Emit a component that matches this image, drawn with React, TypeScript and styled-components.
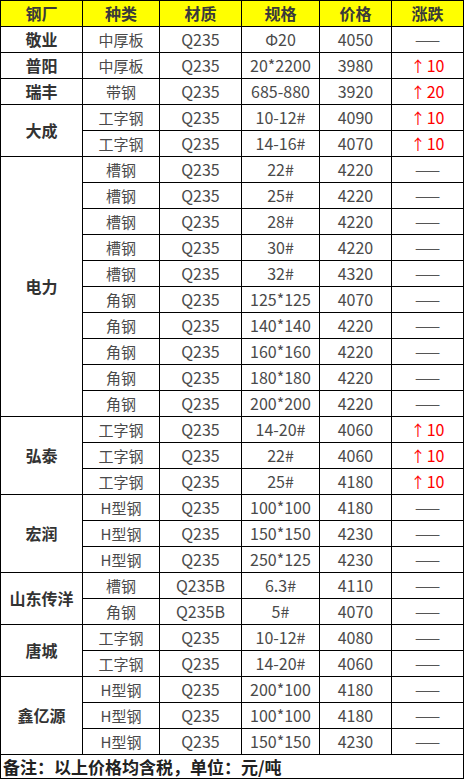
import React from "react";
import styled, { createGlobalStyle } from "styled-components";

const Global = createGlobalStyle`
  html, body { margin: 0; padding: 0; background: #ffffff; }
  body { font-family: "Noto Sans CJK SC", "Noto Sans", sans-serif; }
`;

const Table = styled.table`
  border-collapse: collapse;
  table-layout: fixed;
  width: 463px;
  font-family: "Noto Sans CJK SC", sans-serif;
`;

const HeadCell = styled.th`
  background: #ffff00;
  height: 25px;
  padding: 0;
  border: 1px solid #000;
  color: #3a3a3a;
  font-size: 16px;
  font-weight: 700;
  text-align: center;
  vertical-align: middle;
  line-height: 25px;
`;

const Cell = styled.td<{ $red?: boolean }>`
  height: 25px;
  padding: 0;
  border: 1px solid #000;
  color: ${(p) => (p.$red ? "#ff0000" : "#4a4a4a")};
  font-size: 15px;
  font-weight: 400;
  text-align: center;
  vertical-align: middle;
  line-height: 25px;
  white-space: nowrap;
`;

const NameCell = styled(Cell)`
  color: #333333;
  font-size: 16px;
  font-weight: 700;
`;

const Num = styled.span`
  font-size: 16px;
`;

const Dash = styled.span`
  color: #555555;
  font-size: 15px;
`;

const Arrow = styled.span`
  font-size: 15px;
  margin-right: 1px;
`;

const FootCell = styled.td`
  height: 23px;
  padding: 0 0 0 2px;
  border: 1px solid #000;
  color: #222222;
  font-size: 17px;
  font-weight: 700;
  text-align: left;
  vertical-align: middle;
  line-height: 23px;
  white-space: nowrap;
`;

type Item = { kind: string; mat: string; spec: string; price: string; chg: string };
type Group = { name: string; items: Item[] };

const q = "Q235";
const groups: Group[] = [
  { name: "敬业", items: [{ kind: "中厚板", mat: q, spec: "Φ20", price: "4050", chg: "" }] },
  { name: "普阳", items: [{ kind: "中厚板", mat: q, spec: "20*2200", price: "3980", chg: "10" }] },
  { name: "瑞丰", items: [{ kind: "带钢", mat: q, spec: "685-880", price: "3920", chg: "20" }] },
  {
    name: "大成",
    items: [
      { kind: "工字钢", mat: q, spec: "10-12#", price: "4090", chg: "10" },
      { kind: "工字钢", mat: q, spec: "14-16#", price: "4070", chg: "10" },
    ],
  },
  {
    name: "电力",
    items: [
      { kind: "槽钢", mat: q, spec: "22#", price: "4220", chg: "" },
      { kind: "槽钢", mat: q, spec: "25#", price: "4220", chg: "" },
      { kind: "槽钢", mat: q, spec: "28#", price: "4220", chg: "" },
      { kind: "槽钢", mat: q, spec: "30#", price: "4220", chg: "" },
      { kind: "槽钢", mat: q, spec: "32#", price: "4320", chg: "" },
      { kind: "角钢", mat: q, spec: "125*125", price: "4070", chg: "" },
      { kind: "角钢", mat: q, spec: "140*140", price: "4220", chg: "" },
      { kind: "角钢", mat: q, spec: "160*160", price: "4220", chg: "" },
      { kind: "角钢", mat: q, spec: "180*180", price: "4220", chg: "" },
      { kind: "角钢", mat: q, spec: "200*200", price: "4220", chg: "" },
    ],
  },
  {
    name: "弘泰",
    items: [
      { kind: "工字钢", mat: q, spec: "14-20#", price: "4060", chg: "10" },
      { kind: "工字钢", mat: q, spec: "22#", price: "4060", chg: "10" },
      { kind: "工字钢", mat: q, spec: "25#", price: "4180", chg: "10" },
    ],
  },
  {
    name: "宏润",
    items: [
      { kind: "H型钢", mat: q, spec: "100*100", price: "4180", chg: "" },
      { kind: "H型钢", mat: q, spec: "150*150", price: "4230", chg: "" },
      { kind: "H型钢", mat: q, spec: "250*125", price: "4230", chg: "" },
    ],
  },
  {
    name: "山东传洋",
    items: [
      { kind: "槽钢", mat: "Q235B", spec: "6.3#", price: "4110", chg: "" },
      { kind: "角钢", mat: "Q235B", spec: "5#", price: "4070", chg: "" },
    ],
  },
  {
    name: "唐城",
    items: [
      { kind: "工字钢", mat: q, spec: "10-12#", price: "4080", chg: "" },
      { kind: "工字钢", mat: q, spec: "14-20#", price: "4060", chg: "" },
    ],
  },
  {
    name: "鑫亿源",
    items: [
      { kind: "H型钢", mat: q, spec: "200*100", price: "4180", chg: "" },
      { kind: "H型钢", mat: q, spec: "100*100", price: "4180", chg: "" },
      { kind: "H型钢", mat: q, spec: "150*150", price: "4230", chg: "" },
    ],
  },
];

const widths = [82, 77, 82, 78, 72, 72];

export default function App() {
  return (
    <>
      <Global />
      <Table>
        <colgroup>
          {widths.map((w, i) => (
            <col key={i} style={{ width: w }} />
          ))}
        </colgroup>
        <thead>
          <tr>
            {["钢厂", "种类", "材质", "规格", "价格", "涨跌"].map((h) => (
              <HeadCell key={h}>{h}</HeadCell>
            ))}
          </tr>
        </thead>
        <tbody>
          {groups.map((g) =>
            g.items.map((it, i) => (
              <tr key={g.name + i}>
                {i === 0 && <NameCell rowSpan={g.items.length}>{g.name}</NameCell>}
                <Cell>{it.kind}</Cell>
                <Cell><Num>{it.mat}</Num></Cell>
                <Cell><Num>{it.spec}</Num></Cell>
                <Cell><Num>{it.price}</Num></Cell>
                {it.chg ? (
                  <Cell $red>
                    <Arrow>↑</Arrow>
                    <Num>{it.chg}</Num>
                  </Cell>
                ) : (
                  <Cell><Dash>——</Dash></Cell>
                )}
              </tr>
            ))
          )}
          <tr>
            <FootCell colSpan={6}>备注：以上价格均含税，单位：元/吨</FootCell>
          </tr>
        </tbody>
      </Table>
    </>
  );
}
